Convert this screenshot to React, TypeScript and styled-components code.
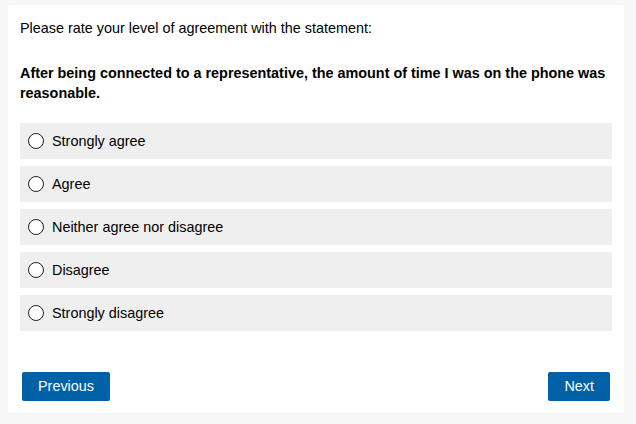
import styled, { createGlobalStyle } from "styled-components";

const GlobalStyle = createGlobalStyle`
  html, body {
    margin: 0;
    background: #f7f7f7;
    font-family: "Liberation Sans", Arial, sans-serif;
    color: #000;
  }
`;

const options = [
  "Strongly agree",
  "Agree",
  "Neither agree nor disagree",
  "Disagree",
  "Strongly disagree",
];

export default function App() {
  return (
    <>
      <GlobalStyle />
      <Page>
        <Card>
          <Prompt>Please rate your level of agreement with the statement:</Prompt>
          <Question>
            After being connected to a representative, the amount of time I was on the phone was
            reasonable.
          </Question>
          <Options>
            {options.map((label) => (
              <Option key={label}>
                <Radio />
                <span>{label}</span>
              </Option>
            ))}
          </Options>
          <Footer>
            <Button>Previous</Button>
            <Button>Next</Button>
          </Footer>
        </Card>
      </Page>
    </>
  );
}

// Styles
const Page = styled.div`
  padding: 5px 12px 11px 8px;
`;

const Card = styled.div`
  background: #fff;
  border-radius: 3px;
  padding: 14px 12px 12px 12px;
  width: 592px;
`;

const Prompt = styled.p`
  margin: 0;
  font-size: 14.4px;
  line-height: 18px;
`;

const Question = styled.p`
  margin: 26px 0 0;
  font-size: 14.4px;
  font-weight: bold;
  line-height: 20px;
`;

const Options = styled.div`
  display: flex;
  flex-direction: column;
  gap: 7px;
  margin-top: 20px;
`;

const Option = styled.label`
  display: flex;
  align-items: center;
  gap: 8px;
  height: 36px;
  padding: 0 8px;
  background: #efefef;
  font-size: 14.4px;
`;

const Radio = styled.span`
  width: 14px;
  height: 14px;
  border: 1.3px solid #222;
  border-radius: 50%;
  background: #fff;
  flex-shrink: 0;
`;

const Footer = styled.div`
  display: flex;
  justify-content: space-between;
  margin-top: 41px;
  padding: 0 2px;
`;

const Button = styled.button`
  height: 29px;
  padding: 0 16px 1px;
  border: none;
  border-radius: 2px;
  background: #0061a6;
  color: #fff;
  font-family: "Liberation Sans", Arial, sans-serif;
  font-size: 14.4px;
  cursor: pointer;
`;
